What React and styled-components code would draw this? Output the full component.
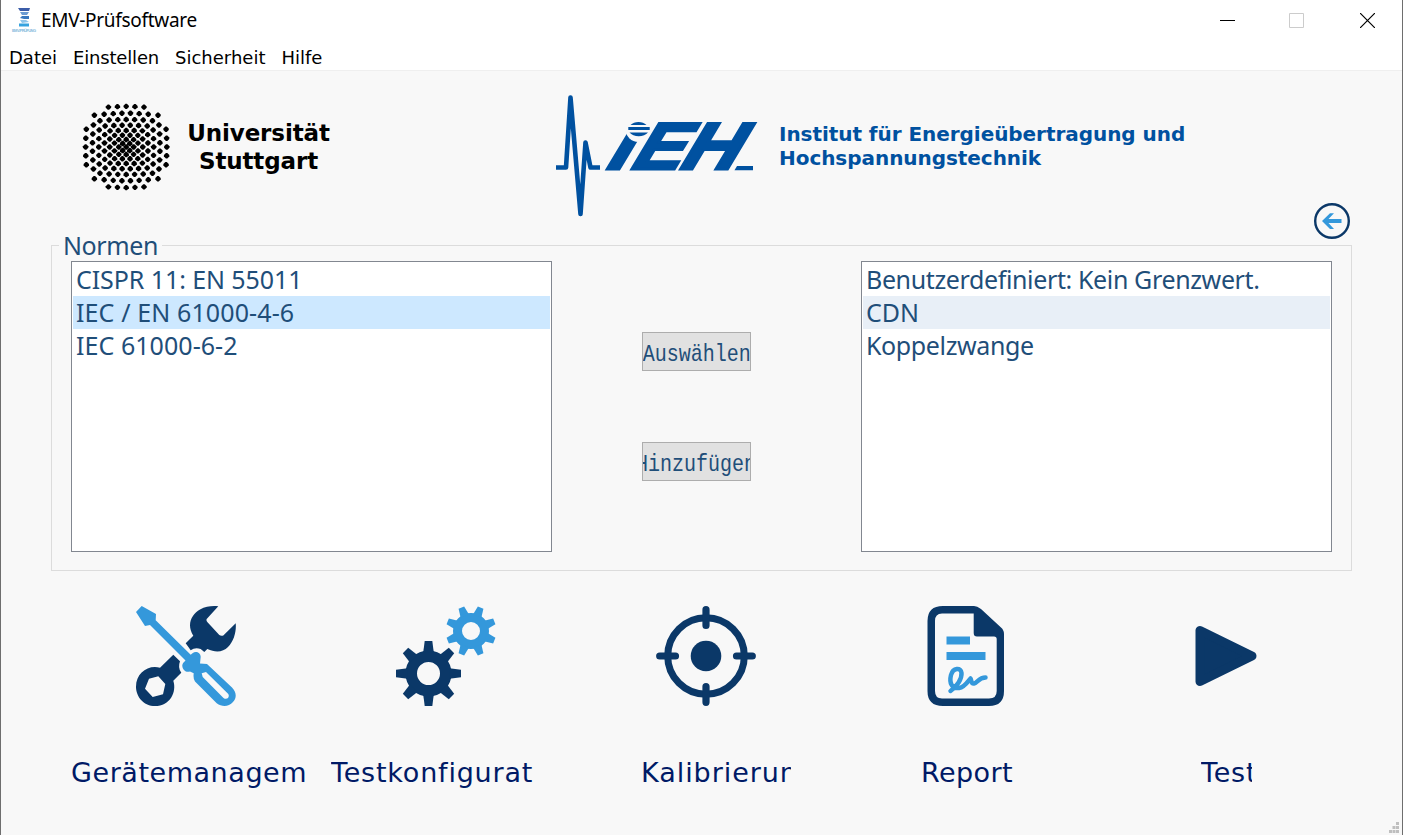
import React from "react";
import styled, { createGlobalStyle } from "styled-components";

const NAVY = "#0b3868";
const SKY = "#3498db";
const INK = "#1f4e79";
const IEH = "#0051a0";

const GlobalStyle = createGlobalStyle`
  * { box-sizing: border-box; }
  body { margin: 0; background: #f8f8f8; overflow: hidden; }
  button { font: inherit; }
`;

const Window = styled.div`
  width: 1403px;
  height: 835px;
  display: flex;
  flex-direction: column;
  position: relative;
  background: #f8f8f8;
  border-left: 1px solid #6e6e6e;
  border-right: 1px solid #6e6e6e;
  overflow: hidden;
`;

const TitleBar = styled.header`
  height: 42px;
  flex: none;
  display: flex;
  align-items: center;
  background: #fff;
  padding-left: 10px;
`;

const Title = styled.span`
  flex: 1;
  margin-left: 4px;
  font: 19px/40px "Noto Sans", sans-serif;
  height: 42px;
  letter-spacing: -0.3px;
  color: #000;
`;

const WindowControls = styled.div`
  display: flex;
  height: 40px;
  align-self: flex-start;
  gap: 54px;
  align-items: center;
  padding-right: 27px;

  svg:last-child { margin-left: 2px; }
`;

const MenuBar = styled.nav`
  height: 29px;
  flex: none;
  display: flex;
  gap: 16px;
  padding-left: 8px;
  background: #fff;
  border-bottom: 1px solid #efefef;
`;

const MenuItem = styled.span`
  font: 18px/31px "DejaVu Sans", sans-serif;
  letter-spacing: ${(p) => p.$spacing || 0}px;
  color: #000;
`;

const Branding = styled.section`
  height: 174px;
  flex: none;
  display: flex;
  align-items: flex-start;
  padding: 22px 51px 0 79px;
`;

const University = styled.div`
  width: 143px;
  margin: 26px 0 0 14px;
  font: bold 23px/28px "DejaVu Sans", sans-serif;
  text-align: center;
  white-space: nowrap;
  color: #000;
  letter-spacing: -0.13px;
`;

const IehLogo = styled.svg`
  flex: none;
  margin-left: 222px;
  overflow: visible;
`;

const Institute = styled.div`
  margin: 29px 0 0 18px;
  font: bold 20px/24px "DejaVu Sans", sans-serif;
  white-space: nowrap;
  color: ${IEH};
  letter-spacing: -0.05px;
`;

const BackButton = styled.button`
  margin: 109px 0 0 auto;
  width: 38px;
  height: 38px;
  padding: 0;
  border: 0;
  background: none;
`;

const NormGroup = styled.fieldset`
  width: 1301px;
  height: 338px;
  flex: none;
  margin: -12px 0 0 50px;
  min-width: 0;
  border: 1px solid #dcdcdc;
  padding: 4px 19px 18px;
  display: flex;
`;

const GroupTitle = styled.legend`
  margin-left: -12px;
  padding: 0 4px 0 4px;
  font: 25px/24px "Noto Sans", sans-serif;
  letter-spacing: -0.4px;
  color: ${INK};
`;

const ListBox = styled.ul`
  width: ${(p) => p.$width}px;
  height: 291px;
  margin: 0;
  padding: 1px;
  list-style: none;
  background: #fff;
  border: 1px solid #828790;
`;

const ListItem = styled.li`
  height: 33px;
  padding-left: 3px;
  font: 25px/33px "Noto Sans", sans-serif;
  letter-spacing: ${(p) => p.$spacing || 0}px;
  white-space: nowrap;
  color: ${INK};
  background: ${(p) => p.$fill || "transparent"};
`;

const Actions = styled.div`
  width: 109px;
  margin: 71px 110px 0 90px;
  display: flex;
  flex-direction: column;
  gap: 71px;
`;

const ActionFrame = styled.button`
  width: 109px;
  height: 39px;
  padding: 6px 0 0;
  display: flex;
  justify-content: center;
  align-items: center;
  overflow: hidden;
  border: 1px solid #adadad;
  background: #e1e1e1;
  color: ${INK};
`;

const ActionText = styled.span`
  flex: none;
  font: 24px/30px "Liberation Mono", monospace;
  white-space: nowrap;
  transform: scaleX(0.833);
`;

const IconRow = styled.div`
  display: grid;
  grid-template-columns: repeat(5, 260px);
  justify-items: center;
  flex: none;
  margin: 35px 0 0 55px;
`;

const Captions = styled.div`
  display: grid;
  grid-template-columns: 260px 310px 280px 280px 60px;
  margin: 47px 0 0 70px;
`;

const Caption = styled.span`
  width: ${(p) => p.$width}px;
  overflow: hidden;
  white-space: nowrap;
  font: 27px/40px "DejaVu Sans", sans-serif;
  letter-spacing: ${(p) => p.$spacing || 0}px;
  color: #001a66;
`;

const SizeGrip = styled.svg`
  position: absolute;
  right: 3px;
  bottom: 2px;
`;

function latticeDots() {
  const dots = [];
  for (let i = -8; i <= 8; i++) {
    for (let j = -8; j <= 8; j++) {
      if ((i + j) % 2 !== 0) continue;
      const a = Math.abs(i);
      const b = Math.abs(j);
      if (a + b > 14 || (a === 8 && b > 4) || (b === 8 && a > 4)) continue;
      const base = 10 + 0.5 * Math.max(a, b);
      const bend = 0.0167 * (i * i - j * j);
      dots.push([(i * (base + bend)) / 2.97, (j * (base - bend)) / 2.97]);
    }
  }
  return dots;
}

function UniversitySeal() {
  return (
    <svg width="93" height="110" viewBox="0 0 93 110">
      <g transform="translate(46.2 54)">
        {latticeDots().map(([x, y], k) => (
          <path key={k} transform={`translate(${x} ${y})`} d="M-.7-2.700H.7L2.700-.7V.7L.7 2.700H-.7L-2.700 .7V-.7Z" />
        ))}
      </g>
    </svg>
  );
}

function LogoLetter({ x, stretch = 1.23, children }) {
  return (
    <text
      transform={`translate(${x} 169.2) skewX(-31) scale(${stretch} 1.02)`}
      fontFamily="Liberation Sans, sans-serif"
      fontWeight="bold"
      fontSize="64.8"
      fill={IEH}
      stroke={IEH}
      strokeWidth="2.8"
    >
      {children}
    </text>
  );
}

function IehMark() {
  return (
    <IehLogo width="209" height="126" viewBox="552 93 209 126">
      <path
        d="M556 167.5H566L570.5 97.5L580.5 214L585.5 142.5L590.5 167.5H600"
        fill="none"
        stroke={IEH}
        strokeWidth="4.6"
        strokeLinejoin="round"
      />
      <LogoLetter x={601.6} stretch={1.3}>i</LogoLetter>
      <path d="M624 114h34v18h-34z" fill="#f8f8f8" />
      <circle cx="638.5" cy="129" r="13" fill="#f8f8f8" />
      <path d="M630.5 125a10.5 8.500 0 0 1 16 0zM628.300 127h21.400v3h-21.400zM629.500 132.500h18.500a10.800 8 0 0 1-18.500 0z" fill={IEH} />
      <LogoLetter x={626.8} stretch={1.17}>E</LogoLetter>
      <LogoLetter x={675.2}>H</LogoLetter>
      <path d="M737 166h16v4.300h-18.500z" fill={IEH} />
    </IehLogo>
  );
}

function AppIcon() {
  return (
    <svg width="26" height="26" viewBox="0 1 26 26">
      <path d="M7 1h12l-1 3H9z" fill="#3b5ca8" />
      <path d="M9 5h9l-2 3h-5z" fill="#6c9bd2" />
      <path d="M11 9h7v3h-5l-4-1z" fill="#3a78bf" />
      <path d="M9 13h6l3 2-7 1z" fill="#8fc5ea" />
      <path d="M8 16.500h10v3H8z" fill="#36a3df" />
      <text x="1" y="25" fontSize="4" fontWeight="bold" fontFamily="Liberation Sans, sans-serif" fill="#83b9dc" textLength="24">EMV-PRÜFUNG</text>
    </svg>
  );
}

function ToolsIcon() {
  return (
    <svg width="100" height="100" viewBox="0 0 100 100">
      <path
        d="M49.700 37.300L57.300 29.700C50 18 56 8 64 3.500C70 .300 76-.300 82.300 .300L70.700 13Q70 14.500 71.300 16L83.300 29Q85 30.300 87.300 29.500L99.700 17.300C100.500 25 98 35 92 41C87 46 80 47 71.300 43L68.300 46L64.700 43Q59 41 54.700 44.300Z"
        fill={NAVY}
      />
      <path
        d="M37.300 48.700L44 55.300Q41.500 62 45.300 66.700L37.300 74.700C41 86 34 100 19 100C8 100 0 91 0 80.700C0 67 12 58.500 24 61.700ZM13 72.700L9 82.700L16.700 91L27 88.300L29.300 78L22.300 70.300Z"
        fill={NAVY}
        fillRule="evenodd"
      />
      <path
        d="M0 6L5.700 0L20 8L19.700 14.300L54.700 48.700L56.500 47.300C60 44.500 64.500 47 64.700 50.700L64 57.500L71 58L96 81.500C100.500 86 101 92 97 96C92.500 101 86 101 80.700 97.300L59 75.500Q57 73 57.700 67.300L54 65.500C50 67 46 63.500 46.300 59Q46.500 57 49.500 54.500L14 19L9 20ZM65.700 67.300L66.700 71L87.500 92C91 94.500 94 91 92.300 88L70 66Z"
        fill={SKY}
        fillRule="evenodd"
      />
    </svg>
  );
}

function Gear({ cx, cy, body, reach, hole, tooth, turn, color }) {
  const teeth = Array.from({ length: 8 }, (_, k) => k * 45 + turn);
  return (
    <g transform={`translate(${cx} ${cy})`}>
      <circle r={(body + hole) / 2} fill="none" stroke={color} strokeWidth={body - hole} />
      {teeth.map((angle) => (
        <path
          key={angle}
          transform={`rotate(${angle})`}
          d={`M${-tooth - 1.5} ${-body + 2}L${-tooth} ${-reach}H${tooth}L${tooth + 1.5} ${-body + 2}Z`}
          fill={color}
        />
      ))}
    </g>
  );
}

function GearsIcon() {
  return (
    <svg width="100" height="100" viewBox="0 0 100 100">
      <Gear cx={32.5} cy={67.5} body={23} reach={32.5} hole={11.5} tooth={3.8} turn={0} color={NAVY} />
      <Gear cx={75} cy={25} body={18} reach={25.2} hole={9} tooth={3} turn={22.5} color={SKY} />
    </svg>
  );
}

function TargetIcon() {
  return (
    <svg width="100" height="100" viewBox="0 0 100 100">
      <circle cx="50" cy="50" r="38.3" fill="none" stroke={NAVY} strokeWidth="7" />
      <circle cx="50" cy="50" r="15.3" fill={NAVY} />
      <path d="M50 3.700V19.500M50 80.500V96.300M3.700 50H19.500M80.500 50H96.300" stroke={NAVY} strokeWidth="7.2" strokeLinecap="round" />
    </svg>
  );
}

function ReportIcon() {
  return (
    <svg width="100" height="100" viewBox="0 0 100 100">
      <path
        d="M27 0H58Q61 0 65 3L85 21.500Q88 24 88 28V85Q88 100 73 100H27Q11.500 100 11.500 85V15Q11.500 0 27 0ZM26 7.500Q19 7.500 19 15V85Q19 92.500 26 92.500H73Q80.700 92.500 80.700 85V33Q80.700 30.500 78 30.500H61Q57.700 30.500 57.700 27V7.500Z"
        fill={NAVY}
        fillRule="evenodd"
      />
      <path d="M30.500 30.500h23.500v8H30.500zM30.500 46h39v8h-39z" fill={SKY} />
      <path
        d="M34.500 85C41 80.500 46 73 45.500 67C45 61 37 61.500 35 69C33 77 36 83 43 82C49 81 52 75 54.500 72.500C55.500 74 55 78 58 77.500C61 77 63 71.500 69.500 71.500"
        fill="none"
        stroke={SKY}
        strokeWidth="4.5"
        strokeLinecap="round"
        strokeLinejoin="round"
      />
    </svg>
  );
}

function PlayIcon() {
  return (
    <svg width="100" height="100" viewBox="0 0 100 100">
      <path d="M24 24.500V75.500L76 50Z" fill={NAVY} stroke={NAVY} strokeWidth="9" strokeLinejoin="round" />
    </svg>
  );
}

function ActionButton({ children }) {
  return (
    <ActionFrame>
      <ActionText>{children}</ActionText>
    </ActionFrame>
  );
}

export default function App() {
  return (
    <Window>
      <GlobalStyle />
      <TitleBar>
        <AppIcon />
        <Title>EMV-Prüfsoftware</Title>
        <WindowControls>
          <svg width="15" height="15"><path d="M0 7.500h15" stroke="#000" /></svg>
          <svg width="15" height="15"><path d="M.5.5h14v14H.5z" fill="none" stroke="#ccc" /></svg>
          <svg width="15" height="15"><path d="M0 0l15 15M15 0L0 15" stroke="#000" strokeWidth="1.2" /></svg>
        </WindowControls>
      </TitleBar>
      <MenuBar>
        <MenuItem>Datei</MenuItem>
        <MenuItem $spacing={-0.18}>Einstellen</MenuItem>
        <MenuItem>Sicherheit</MenuItem>
        <MenuItem>Hilfe</MenuItem>
      </MenuBar>
      <Branding>
        <UniversitySeal />
        <University>Universität<br />Stuttgart</University>
        <IehMark />
        <Institute>Institut für Energieübertragung und<br />Hochspannungstechnik</Institute>
        <BackButton aria-label="Zurück">
          <svg width="38" height="38" viewBox="0 0 38 38">
            <circle cx="19" cy="19" r="16.8" fill="none" stroke={NAVY} strokeWidth="2.4" />
            <path d="M9 19L17 11.200H21L15.500 17H28.500V21H15.500L21 27H17Z" fill={SKY} />
          </svg>
        </BackButton>
      </Branding>
      <NormGroup>
        <GroupTitle>Normen</GroupTitle>
        <ListBox $width={481}>
          <ListItem $spacing={-0.08}>CISPR 11: EN 55011</ListItem>
          <ListItem $fill="#cde8ff" $spacing={0.12}>IEC / EN 61000-4-6</ListItem>
          <ListItem $spacing={0.05}>IEC 61000-6-2</ListItem>
        </ListBox>
        <Actions>
          <ActionButton>Auswählen</ActionButton>
          <ActionButton>Hinzufügen</ActionButton>
        </Actions>
        <ListBox $width={471}>
          <ListItem $spacing={-0.37}>Benutzerdefiniert: Kein Grenzwert.</ListItem>
          <ListItem $fill="#e8eff7">CDN</ListItem>
          <ListItem $spacing={-0.37}>Koppelzwange</ListItem>
        </ListBox>
      </NormGroup>
      <IconRow>
        <ToolsIcon />
        <GearsIcon />
        <TargetIcon />
        <ReportIcon />
        <PlayIcon />
      </IconRow>
      <Captions>
        <Caption $width={240} $spacing={0.55}>Gerätemanagem</Caption>
        <Caption $width={210} $spacing={0.8}>Testkonfigurat</Caption>
        <Caption $width={150} $spacing={0.95}>Kalibrierun</Caption>
        <Caption $width={110} $spacing={0.4}>Report</Caption>
        <Caption $width={51} $spacing={0.8}>Test</Caption>
      </Captions>
      <SizeGrip width="10" height="11" viewBox="0 0 10 11" fill="#bfbfbf">
        <path d="M7 0h3v3H7zM3.500 4h3v3h-3zM7 4h3v3H7zM0 8h3v3H0zM3.500 8h3v3h-3zM7 8h3v3H7z" />
      </SizeGrip>
    </Window>
  );
}
